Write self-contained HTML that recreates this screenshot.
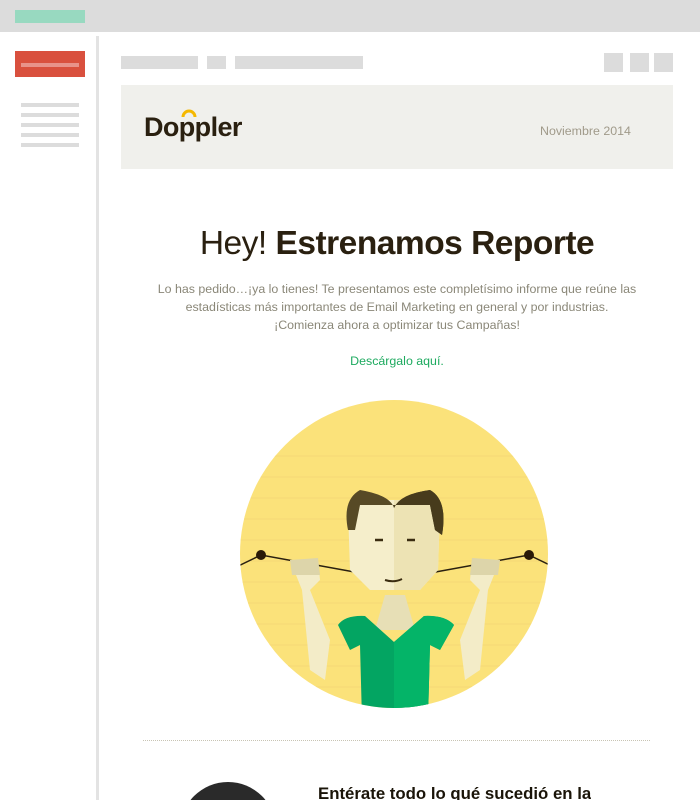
<!DOCTYPE html>
<html><head><meta charset="utf-8"><style>
*{margin:0;padding:0;box-sizing:border-box}
html,body{width:700px;height:800px;overflow:hidden}
body{background:#fff;font-family:"Liberation Sans",sans-serif;position:relative}
.a{position:absolute}
.g{background:#dcdcdc}
</style></head><body>
<div class="a g" style="left:0;top:0;width:700px;height:32px"></div>
<div class="a" style="left:15px;top:10px;width:70px;height:13px;background:#98d9c0"></div>
<div class="a" style="left:96px;top:36px;width:3px;height:764px;background:#e3e3e3"></div>
<div class="a" style="left:15px;top:51px;width:70px;height:26px;background:#d9503e"></div>
<div class="a" style="left:21px;top:63px;width:58px;height:4px;background:#e8928a"></div>
<div class="a g" style="left:21px;top:103px;width:58px;height:4px"></div>
<div class="a g" style="left:21px;top:113px;width:58px;height:4px"></div>
<div class="a g" style="left:21px;top:123px;width:58px;height:4px"></div>
<div class="a g" style="left:21px;top:133px;width:58px;height:4px"></div>
<div class="a g" style="left:21px;top:143px;width:58px;height:4px"></div>
<div class="a g" style="left:121px;top:56px;width:77px;height:13px"></div>
<div class="a g" style="left:207px;top:56px;width:19px;height:13px"></div>
<div class="a g" style="left:235px;top:56px;width:128px;height:13px"></div>
<div class="a g" style="left:604px;top:53px;width:19px;height:19px"></div>
<div class="a g" style="left:630px;top:53px;width:19px;height:19px"></div>
<div class="a g" style="left:654px;top:53px;width:19px;height:19px"></div>
<div class="a" style="left:121px;top:85px;width:552px;height:84px;background:#f0f0ec"></div>
<div class="a" style="left:144px;top:112px;font-size:27px;font-weight:bold;color:#2a2010;letter-spacing:-0.6px">Doppler</div>
<svg class="a" style="left:180px;top:108px" width="18" height="10"><path d="M3 9 A6 6 0 0 1 15 9" stroke="#f5b800" stroke-width="3" fill="none"/></svg>
<div class="a" style="left:540px;top:124px;font-size:12.4px;color:#a09a8a">Noviembre 2014</div>
<div class="a" style="left:121px;top:225px;width:552px;text-align:center;font-size:33.5px;color:#2a2010;letter-spacing:-0.5px">Hey! <b>Estrenamos Reporte</b></div>
<div class="a" style="left:121px;top:280px;width:552px;text-align:center;font-size:12.4px;line-height:18px;color:#8a8778">Lo has pedido…¡ya lo tienes! Te presentamos este completísimo informe que reúne las<br>estadísticas más importantes de Email Marketing en general y por industrias.<br>¡Comienza ahora a optimizar tus Campañas!</div>
<div class="a" style="left:121px;top:354px;width:552px;text-align:center;font-size:12.4px;color:#1daa5f">Descárgalo aquí.</div>
<svg class="a" style="left:230px;top:390px" width="330" height="330" viewBox="0 0 330 330">
<defs><clipPath id="c"><circle cx="164" cy="164" r="154"/></clipPath></defs>
<circle cx="164" cy="164" r="154" fill="#fbe27a"/>
<g clip-path="url(#c)">
<g stroke="#f5d877" stroke-width="1"><line x1="0" y1="66" x2="330" y2="66"/><line x1="0" y1="87" x2="330" y2="87"/><line x1="0" y1="108" x2="330" y2="108"/><line x1="0" y1="129" x2="330" y2="129"/><line x1="0" y1="150" x2="330" y2="150"/><line x1="0" y1="171" x2="330" y2="171"/><line x1="0" y1="192" x2="330" y2="192"/><line x1="0" y1="213" x2="330" y2="213"/><line x1="0" y1="234" x2="330" y2="234"/><line x1="0" y1="255" x2="330" y2="255"/><line x1="0" y1="276" x2="330" y2="276"/><line x1="0" y1="297" x2="330" y2="297"/></g>
<path d="M0 180 L31 165 L130 183 M200 183 L299 165 L330 180" stroke="#2a2010" stroke-width="1.5" fill="none"/>
<circle cx="31" cy="165" r="5" fill="#2a1a08"/><circle cx="299" cy="165" r="5" fill="#2a1a08"/>
<path d="M60 170 L88 170 L90 190 L80 200 L100 250 L95 290 L80 280 L72 200 Z" fill="#f3ecc8"/>
<path d="M270 170 L242 170 L240 190 L250 200 L230 250 L235 290 L250 280 L258 200 Z" fill="#f3ecc8"/>
<path d="M60 170 L88 168 L90 185 L62 185Z M270 170 L242 168 L240 185 L268 185Z" fill="#ddd5aa"/>
<path d="M155 205 L175 205 L185 240 L145 240Z" fill="#e7dfb6"/>
<path d="M118 120 Q116 110 130 110 L200 110 Q212 110 210 120 L208 180 L190 200 L140 200 L120 180Z" fill="#f5eecb"/>
<path d="M164 110 L200 110 Q212 110 210 120 L208 180 L190 200 L164 200Z" fill="#ede3b4"/>
<path d="M118 140 Q112 110 130 100 Q160 105 164 118 Q170 104 200 100 Q218 110 212 145 L205 140 L200 115 L130 115 L125 140Z" fill="#574a26"/>
<path d="M164 118 Q170 104 200 100 Q218 110 212 145 L205 140 L200 115 L164 115Z" fill="#473b1c"/>
<path d="M145 150 h8 M177 150 h8" stroke="#3a2c10" stroke-width="2.5"/>
<path d="M155 190 Q164 193 172 189" stroke="#3a2c10" stroke-width="2" fill="none"/>
<path d="M108 235 Q115 225 135 226 L164 252 L194 226 Q215 225 224 235 L210 260 L200 255 L198 330 L132 330 L130 255 L120 260Z" fill="#03a562"/>
<path d="M164 252 L194 226 Q215 225 224 235 L210 260 L200 255 L198 330 L164 330Z" fill="#04b468"/>
</g></svg>
<div class="a" style="left:143px;top:740px;width:507px;border-top:1px dotted #c8c4b4"></div>
<div class="a" style="left:180px;top:782px;width:96px;height:18px;overflow:hidden"><div style="width:96px;height:96px;border-radius:50%;background:#2a2a2a"></div></div>
<div class="a" style="left:318px;top:784px;height:16px;overflow:hidden;font-size:16.8px;line-height:20px;font-weight:bold;color:#1a1408;white-space:nowrap">Entérate todo lo qué sucedió en la</div>
</body></html>
